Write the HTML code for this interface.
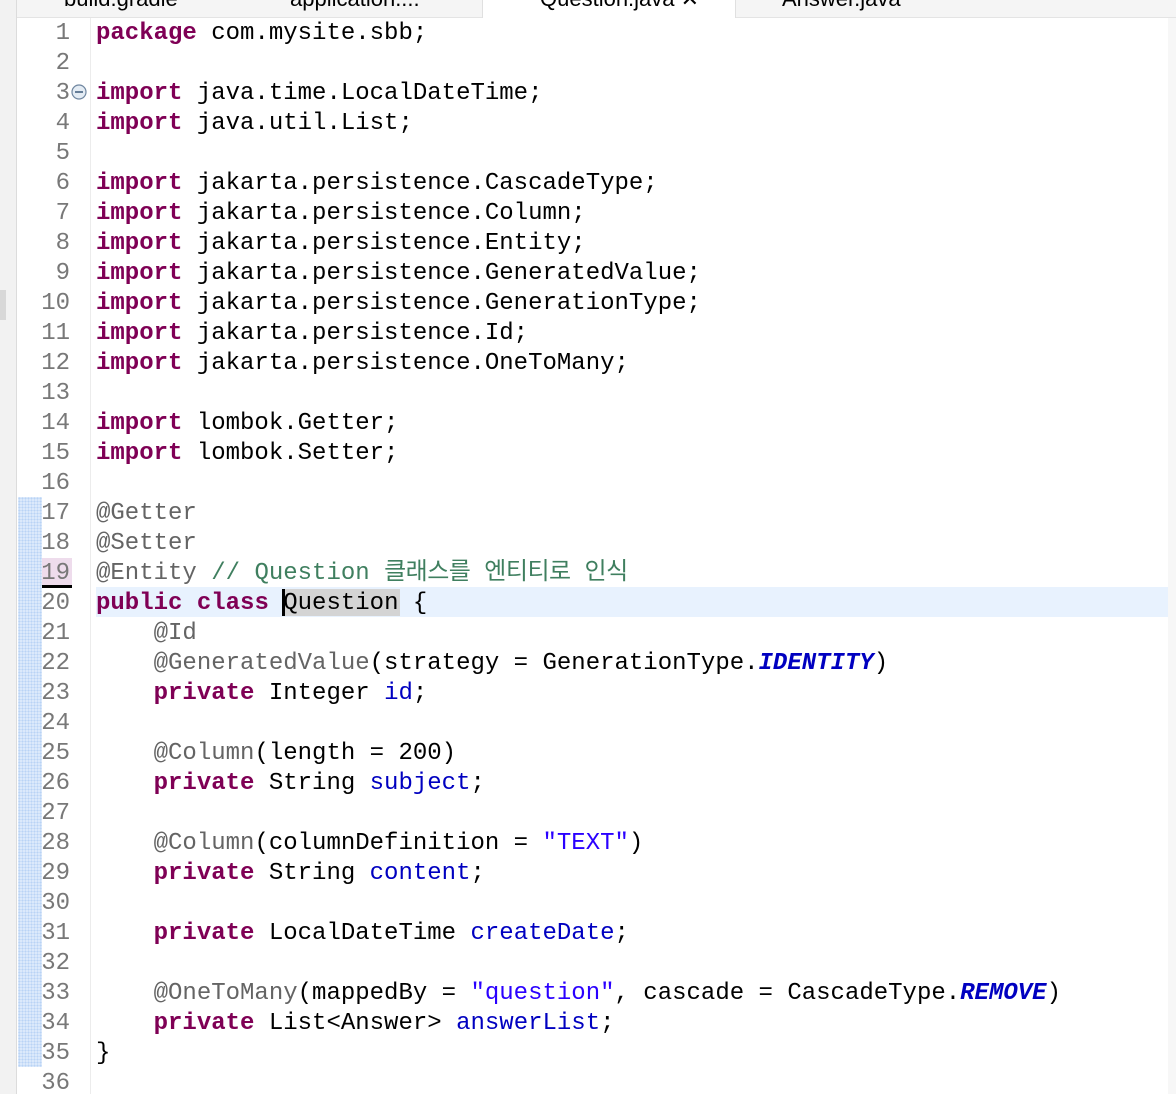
<!DOCTYPE html>
<html><head><meta charset="utf-8"><style>
body{margin:0;width:1176px;height:1094px;overflow:hidden;background:#fff;position:relative;font-family:"Liberation Mono","Noto Sans CJK KR",monospace;}
.l{position:absolute;left:96px;font-size:24px;line-height:30px;white-space:pre;color:#000;height:30px}
.n{position:absolute;width:70px;text-align:right;left:0;font-size:24px;line-height:30px;color:#787878}
.k{color:#7f0055;font-weight:bold}
.a{color:#646464}
.f{color:#0000c0}
.s{color:#2a00ff}
.c{color:#3f7f5f}
.i{color:#0000c0;font-weight:bold;font-style:italic}
.ko{letter-spacing:-0.5px}
.tab{position:absolute;top:-14px;font-family:"Liberation Sans",sans-serif;font-size:22px;color:#000;white-space:nowrap}
</style></head><body>
<div style="position:absolute;left:0;top:0;width:16px;height:1094px;background:#f2f2f2;border-right:1px solid #dcdcdc"></div>
<div style="position:absolute;left:0;top:290px;width:6px;height:30px;background:#d8d8d8"></div>
<div style="position:absolute;left:17px;top:0;width:1159px;height:17px;background:#f5f5f5;border-bottom:1px solid #e4e4e4"></div>
<div style="position:absolute;left:482px;top:0;width:252px;height:18px;background:#fff;border-left:1px solid #e0e0e0;border-right:1px solid #e0e0e0"></div>
<div class="tab" style="left:64px">build.gradle</div>
<div class="tab" style="left:290px">application....</div>
<div class="tab" style="left:540px">Question.java ✕</div>
<div class="tab" style="left:782px">Answer.java</div>
<div style="position:absolute;left:1168px;top:18px;width:8px;height:1076px;background:#f7f7f7"></div>
<div style="position:absolute;left:90px;top:18px;width:1px;height:1076px;background:#ececec"></div>
<div style="position:absolute;left:18px;top:497px;width:24px;height:570px;background-color:#dbe9fb;background-image:radial-gradient(#b9d3f5 1px,transparent 1px);background-size:3px 3px"></div>
<div style="position:absolute;left:96px;top:587px;width:1072px;height:30px;background:#e8f2fe"></div>
<div style="position:absolute;left:284px;top:589px;width:116px;height:27px;background:#d4d4d4"></div>
<div style="position:absolute;left:282px;top:589px;width:3px;height:27px;background:#000"></div>
<div style="position:absolute;left:42px;top:558px;width:30px;height:28px;background:#eedcec"></div>
<div style="position:absolute;left:42px;top:585px;width:30px;height:3px;background:#000"></div>
<svg style="position:absolute;left:70px;top:83px" width="18" height="18"><circle cx="9" cy="9" r="7" fill="#e4ecf4" stroke="#6f86a0" stroke-width="1.2"/><line x1="5" y1="9" x2="13" y2="9" stroke="#3d5a7a" stroke-width="1.5"/></svg>
<div id="code"></div>
<script>
var L=[
'<span class="k">package</span> com.mysite.sbb;','',
'<span class="k">import</span> java.time.LocalDateTime;',
'<span class="k">import</span> java.util.List;','',
'<span class="k">import</span> jakarta.persistence.CascadeType;',
'<span class="k">import</span> jakarta.persistence.Column;',
'<span class="k">import</span> jakarta.persistence.Entity;',
'<span class="k">import</span> jakarta.persistence.GeneratedValue;',
'<span class="k">import</span> jakarta.persistence.GenerationType;',
'<span class="k">import</span> jakarta.persistence.Id;',
'<span class="k">import</span> jakarta.persistence.OneToMany;','',
'<span class="k">import</span> lombok.Getter;',
'<span class="k">import</span> lombok.Setter;','',
'<span class="a">@Getter</span>',
'<span class="a">@Setter</span>',
'<span class="a">@Entity</span> <span class="c">// Question <span class="ko">클래스를 엔티티로 인식</span></span>',
'<span class="k">public</span> <span class="k">class</span> Question {',
'    <span class="a">@Id</span>',
'    <span class="a">@GeneratedValue</span>(strategy = GenerationType.<span class="i">IDENTITY</span>)',
'    <span class="k">private</span> Integer <span class="f">id</span>;','',
'    <span class="a">@Column</span>(length = 200)',
'    <span class="k">private</span> String <span class="f">subject</span>;','',
'    <span class="a">@Column</span>(columnDefinition = <span class="s">"TEXT"</span>)',
'    <span class="k">private</span> String <span class="f">content</span>;','',
'    <span class="k">private</span> LocalDateTime <span class="f">createDate</span>;','',
'    <span class="a">@OneToMany</span>(mappedBy = <span class="s">"question"</span>, cascade = CascadeType.<span class="i">REMOVE</span>)',
'    <span class="k">private</span> List&lt;Answer&gt; <span class="f">answerList</span>;',
'}',''];
var h='';
for(var i=0;i<L.length;i++){var t=19+i*30;
h+='<div class="n" style="top:'+t+'px">'+(i+1)+'</div><div class="l" style="top:'+t+'px">'+L[i]+'</div>';}
document.getElementById('code').innerHTML=h;
</script>
</body></html>
